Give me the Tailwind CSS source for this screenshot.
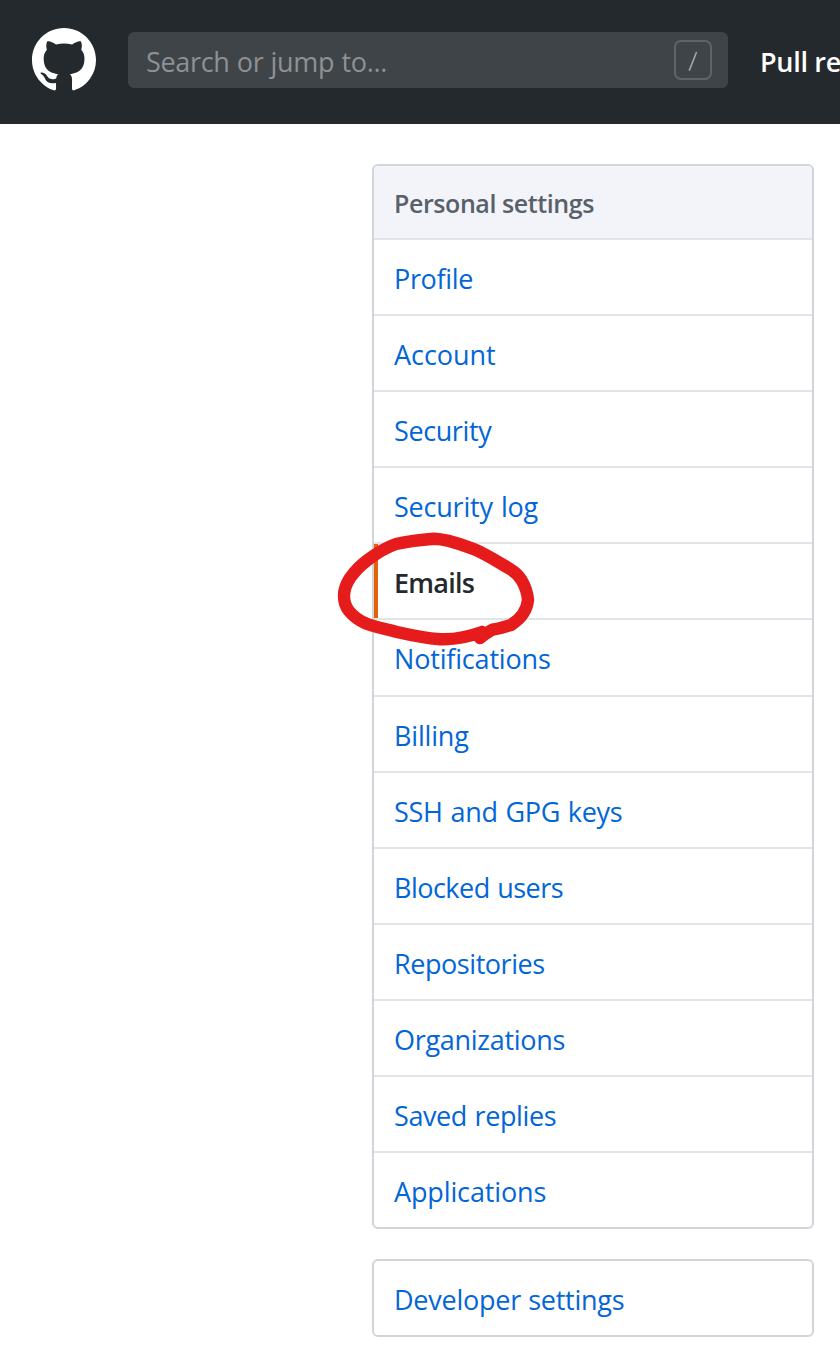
<!DOCTYPE html>
<html lang="en">
<head>
<meta charset="utf-8">
<title>Personal settings</title>
<script src="https://cdn.jsdelivr.net/npm/@tailwindcss/browser@4"></script>
</head>
<body class="relative w-[840px] h-[1358px] overflow-hidden bg-white font-['Open_Sans','Noto_Sans',sans-serif] text-[27px]">
<header class="flex h-[124px] items-start bg-[#24292e] pl-8">
  <a href="#" class="mt-7 mr-8 block size-16 shrink-0 text-white" aria-label="Homepage">
    <svg viewBox="0 0 16 16" class="size-16" fill="currentColor"><path fill-rule="evenodd" d="M8 0C3.58 0 0 3.58 0 8c0 3.54 2.29 6.53 5.47 7.59.4.07.55-.17.55-.38 0-.19-.01-.82-.01-1.49-2.01.37-2.53-.49-2.69-.94-.09-.23-.48-.94-.82-1.13-.28-.15-.68-.52-.01-.53.63-.01 1.08.58 1.23.82.72 1.21 1.87.87 2.33.66.07-.52.28-.87.51-1.07-1.78-.2-3.64-.89-3.64-3.95 0-.87.31-1.59.82-2.15-.08-.2-.36-1.02.08-2.12 0 0 .67-.21 2.2.82.64-.18 1.32-.27 2-.27.68 0 1.36.09 2 .27 1.53-1.04 2.2-.82 2.2-.82.44 1.1.16 1.92.08 2.12.51.56.82 1.27.82 2.15 0 3.07-1.87 3.75-3.65 3.95.29.25.54.73.54 1.48 0 1.07-.01 1.93-.01 2.2 0 .21.15.46.55.38A8.013 8.013 0 0 0 16 8c0-4.42-3.58-8-8-8z"/></svg>
  </a>
  <div class="mt-8 flex h-14 w-[600px] shrink-0 items-center justify-between rounded-md bg-[#3f4448] pr-4 pl-[18px]">
    <span class="pt-[5px] tracking-[-0.32px] [word-spacing:0.5px] whitespace-nowrap text-[#8f9193]">Search or jump to...</span>
    <svg class="h-10 w-[38px]" viewBox="0 0 38 40" fill="none"><rect x="1" y="1" width="36" height="38" rx="6" stroke="#606468" stroke-width="2"/><path d="M22.6 12 15.2 30.6" stroke="#a2a4a6" stroke-width="1.6"/></svg>
  </div>
  <a href="#" class="mt-8 ml-8 flex h-14 items-center pt-[5px] font-semibold tracking-[-0.3px] whitespace-nowrap text-white">Pull re</a>
</header>
<main class="mt-10 ml-[372px] w-[442px] leading-[36px] text-[#0366d6]">
  <nav class="overflow-hidden rounded-md border-2 border-[#d1d5da] whitespace-nowrap divide-y-2 divide-[#e1e4e8]">
    <h3 class="flex h-[74px] items-center bg-[#f3f4f9] pt-[1px] pl-5 text-[25px] font-semibold tracking-[-0.42px] text-[#586069]">Personal settings</h3>
    <a href="#" class="flex h-[76px] items-center pt-[3px] pl-5 tracking-[-0.35px]">Profile</a>
    <a href="#" class="flex h-[76px] items-center pt-[3px] pl-5 tracking-[-0.03px]">Account</a>
    <a href="#" class="flex h-[76px] items-center pt-[3px] pl-5 tracking-[-0.4px]">Security</a>
    <a href="#" class="flex h-[76px] items-center pt-[3px] pl-5 tracking-[-0.22px] [word-spacing:1.5px]">Security log</a>
    <a href="#" class="flex h-[76px] items-stretch font-semibold tracking-[-0.75px] text-[#24292e]"><span class="w-1 bg-[#e36209]"></span><span class="flex items-center pt-[3px] pl-4">Emails</span></a>
    <a href="#" class="flex h-[77px] items-center pt-[2px] pl-5 tracking-[-0.18px]">Notifications</a>
    <a href="#" class="flex h-[76px] items-center pt-[3px] pl-5 tracking-[-0.18px]">Billing</a>
    <a href="#" class="flex h-[76px] items-center pt-[3px] pl-5 tracking-[-0.28px] [word-spacing:1px]">SSH and GPG keys</a>
    <a href="#" class="flex h-[76px] items-center pt-[3px] pl-5 tracking-[-0.52px] [word-spacing:1px]">Blocked users</a>
    <a href="#" class="flex h-[76px] items-center pt-[3px] pl-5 tracking-[-0.44px]">Repositories</a>
    <a href="#" class="flex h-[76px] items-center pt-[3px] pl-5 tracking-[-0.29px]">Organizations</a>
    <a href="#" class="flex h-[76px] items-center pt-[3px] pl-5 tracking-[-0.4px] [word-spacing:1px]">Saved replies</a>
    <a href="#" class="flex h-[74px] items-center pt-[3px] pl-5 tracking-[-0.13px]">Applications</a>
  </nav>
  <nav class="mt-[30px] rounded-md border-2 border-[#d1d5da] whitespace-nowrap">
    <a href="#" class="flex h-[74px] items-center pt-[3px] pl-5 tracking-[-0.25px] [word-spacing:0.5px]">Developer settings</a>
  </nav>
</main>
<!-- hand-drawn marker ring around the Emails entry -->
<svg class="pointer-events-none absolute top-[520px] left-[330px]" width="220" height="140" viewBox="330 520 220 140" fill="none" stroke="#e61c1c" stroke-width="12.4" stroke-linecap="round" stroke-linejoin="round">
  <path d="M482 632C475 634.500 469 636 463 637.300C455 639 447 639.500 440 639.200C424 638 410 635 397 632C386 629 375 627 366 623.500C359 620.500 353 616 349 611C345 606 344 601 344 596C344 590 346 584 350 578C355 571 361 565 367 560.500C376 553.500 386 547.500 396 544C409 541 423 539.500 434 538.700C448 539 461 544.500 473 548.800C486 554 498 562 510 569C515 572 519 576 521.500 580C525 586 527.500 593 528 600C527 610 522 618 511 625C505 626.500 500 629 493 629.500C488 631.500 484 635 480 638L482 632"/>
</svg>
</body>
</html>
